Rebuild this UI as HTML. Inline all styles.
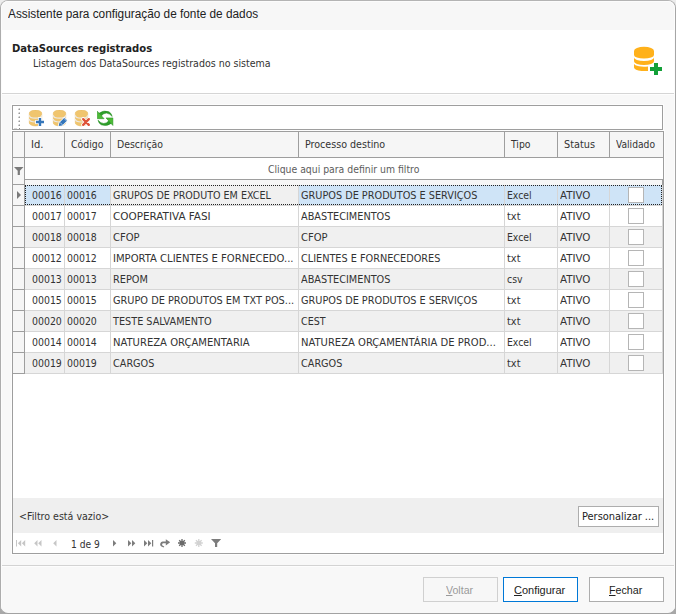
<!DOCTYPE html><html lang="pt-BR"><head><meta charset="utf-8"><title>Assistente para configuração de fonte de dados</title><style>
*{box-sizing:border-box;margin:0;padding:0}
html,body{width:676px;height:614px;overflow:hidden;background:linear-gradient(to bottom,#ececec 0,#ececec 50%,#a8a8a8 50%,#a8a8a8 100%)}
body{font-family:"DejaVu Sans Condensed","Liberation Sans",sans-serif;font-size:11px;color:#333;position:relative}
.win{position:absolute;left:0;top:0;width:676px;height:614px;background:#f8f8f8;border:1px solid #adadad;border-top-color:#b4b4b4;border-right-color:#a6a6a6;border-bottom-color:#a2a2a2;border-radius:8px;overflow:hidden}
.a{position:absolute}
.t{position:absolute;white-space:nowrap;line-height:14px;transform-origin:0 0}
.hl{position:absolute;height:1px}
.vl{position:absolute;width:1px}
.btn{position:absolute;height:25px;border:1px solid #adadad;background:#fff}
.cb{position:absolute;width:16px;height:16px;border:1px solid #b5b5b5;background:#fff}
u{text-decoration:underline;text-underline-offset:1px}
</style></head><body>
<div class="win">
<div class="a" style="left:-1px;top:-1px;width:676px;height:614px">
<div class="a" style="left:0;top:0;width:676px;height:30px;background:#f7f7f7"></div>
<div class="t" style="left:8.0px;top:7px;font-family:'Liberation Sans',sans-serif;font-size:12px;color:#222;transform:scaleX(0.984)">Assistente para configuração de fonte de dados</div>
<div class="a" style="left:0;top:30px;width:676px;height:63px;background:#fff"></div>
<div class="hl" style="left:0;top:93px;width:676px;background:#d5d5d5"></div>
<div class="hl" style="left:0;top:94px;width:676px;background:#fdfdfd"></div>
<div class="t" style="left:11.6px;top:42px;font-weight:bold;color:#222;transform:scaleX(1.015)">DataSources registrados</div>
<div class="t" style="left:33.0px;top:57px;;transform:scaleX(0.958)">Listagem dos DataSources registrados no sistema</div>
<svg class="a" style="left:630px;top:43px" width="36" height="36" viewBox="630 43 36 36">
<g fill="#ffb11b">
<path d="M634 51 a10 4.2 0 0 1 20 0 v4 a10 3.6 0 0 1 -20 0z"/>
<path d="M634 57.500 a10 3.400 0 0 0 20 0 v3.700 a10 3.800 0 0 1 -20 0z"/>
<path d="M634 63.700 a10 3.400 0 0 0 14 2.700 v4.700 h-6.500 a10 4 0 0 1 -7.500 -3.600z"/>
</g>
<path fill="#13a038" d="M654 63h4v4h4v4h-4v4h-4v-4h-4v-4h4z"/>
</svg>
<div class="a" style="left:12px;top:105px;width:651px;height:25px;background:#fff;border:1px solid #9e9e9e;box-shadow:0 0 0 1px #fdfdfd"></div>
<div class="a" style="left:18px;top:108px;width:2px;height:2px;background:#c6c6c6"></div>
<div class="a" style="left:18px;top:108px;width:1px;height:1px;background:#ececec"></div>
<div class="a" style="left:19px;top:109px;width:1px;height:1px;background:#9a9a9a"></div>
<div class="a" style="left:18px;top:112px;width:2px;height:2px;background:#c6c6c6"></div>
<div class="a" style="left:18px;top:112px;width:1px;height:1px;background:#ececec"></div>
<div class="a" style="left:19px;top:113px;width:1px;height:1px;background:#9a9a9a"></div>
<div class="a" style="left:18px;top:116px;width:2px;height:2px;background:#c6c6c6"></div>
<div class="a" style="left:18px;top:116px;width:1px;height:1px;background:#ececec"></div>
<div class="a" style="left:19px;top:117px;width:1px;height:1px;background:#9a9a9a"></div>
<div class="a" style="left:18px;top:120px;width:2px;height:2px;background:#c6c6c6"></div>
<div class="a" style="left:18px;top:120px;width:1px;height:1px;background:#ececec"></div>
<div class="a" style="left:19px;top:121px;width:1px;height:1px;background:#9a9a9a"></div>
<div class="a" style="left:18px;top:124px;width:2px;height:2px;background:#c6c6c6"></div>
<div class="a" style="left:18px;top:124px;width:1px;height:1px;background:#ececec"></div>
<div class="a" style="left:19px;top:125px;width:1px;height:1px;background:#9a9a9a"></div>
<div class="a" style="left:19px;top:128px;width:1px;height:1px;background:#8c8c8c"></div><div class="a" style="left:14px;top:128px;width:3px;height:1px;background:#d8d8d8"></div>
<svg class="a" style="left:28px;top:110px" width="17" height="17" viewBox="0 0 17 17">
<g transform="translate(1,0)"><path fill="#f0c56e" stroke="#e6b85c" stroke-width="0.500" d="M0.300 3a6.200 2.900 0 0 1 12.400 0v10a6.200 2.900 0 0 1 -12.400 0z"/>
<path fill="none" stroke="#ece9e2" stroke-width="1.200" d="M0.300 5.300a6.200 2.900 0 0 0 12.400 0M0.300 9.100a6.200 2.900 0 0 0 12.400 0"/></g>
<path fill="#3576ba" stroke="#fff" stroke-width="1.600" paint-order="stroke" d="M10.800 8h2.400v2.800h2.800v2.400h-2.800v2.800h-2.400v-2.800h-2.800v-2.400h2.800z"/>
</svg>
<svg class="a" style="left:52px;top:110px" width="17" height="17" viewBox="0 0 17 17">
<g transform="translate(1,0)"><path fill="#f0c56e" stroke="#e6b85c" stroke-width="0.500" d="M0.300 3a6.200 2.900 0 0 1 12.400 0v10a6.200 2.900 0 0 1 -12.400 0z"/>
<path fill="none" stroke="#ece9e2" stroke-width="1.200" d="M0.300 5.300a6.200 2.900 0 0 0 12.400 0M0.300 9.100a6.200 2.900 0 0 0 12.400 0"/></g>
<path fill="#3576ba" stroke="#fff" stroke-width="1.600" paint-order="stroke" d="M6.700 15.900l0.700-3.100 5-5 2.800 2.800-5 5z"/><path stroke="#dfe9f5" stroke-width="0.700" d="M12 8.400l2.700 2.700M8 12.400l2.700 2.700" fill="none"/>
</svg>
<svg class="a" style="left:74px;top:110px" width="17" height="17" viewBox="0 0 17 17">
<g transform="translate(1,0)"><path fill="#f0c56e" stroke="#e6b85c" stroke-width="0.500" d="M0.300 3a6.200 2.900 0 0 1 12.400 0v10a6.200 2.900 0 0 1 -12.400 0z"/>
<path fill="none" stroke="#ece9e2" stroke-width="1.200" d="M0.300 5.300a6.200 2.900 0 0 0 12.400 0M0.300 9.100a6.200 2.900 0 0 0 12.400 0"/></g>
<path stroke="#fff" stroke-width="4" stroke-linecap="round" fill="none" d="M9.200 9.200l5.600 5.600M14.800 9.200l-5.600 5.600"/><path stroke="#de5438" stroke-width="2.400" stroke-linecap="round" fill="none" d="M9.200 9.200l5.600 5.600M14.800 9.200l-5.600 5.600"/>
</svg>
<svg class="a" style="left:97px;top:110px" width="17" height="17" viewBox="0 0 17 17">
<g fill="#2f9f2a" stroke="#1f8a1c" stroke-width="0.500" stroke-linejoin="round"><path d="M2 3.200Q7 -0.300 12 1.800Q14.600 3.300 15.200 6.400Q12.800 3.500 9.500 3.100Q6.500 3.100 4.400 5.800z"/><path d="M14.200 13.400Q9.200 16.900 4.200 14.800Q1.600 13.300 1 10.200Q3.400 13.100 6.700 13.500Q9.700 13.500 11.800 10.800z"/><path fill="#4cbb35" d="M0.300 1.200v7.500h6.800z"/><path fill="#4cbb35" d="M15.900 15.500v-7.600h-6.900z"/></g>
</svg>
<div class="a" style="left:12px;top:131px;width:652px;height:423px;background:#fff;border:1px solid #9e9e9e;box-shadow:0 0 0 1px #fdfdfd"></div>
<div class="a" style="left:13px;top:132px;width:650px;height:25px;background:#f6f6f6"></div>
<div class="hl" style="left:13px;top:157px;width:650px;background:#9e9e9e"></div>
<div class="vl" style="left:24px;top:132px;height:25px;background:#9e9e9e"></div>
<div class="vl" style="left:64px;top:132px;height:25px;background:#9e9e9e"></div>
<div class="vl" style="left:110px;top:132px;height:25px;background:#9e9e9e"></div>
<div class="vl" style="left:298px;top:132px;height:25px;background:#9e9e9e"></div>
<div class="vl" style="left:504px;top:132px;height:25px;background:#9e9e9e"></div>
<div class="vl" style="left:557px;top:132px;height:25px;background:#9e9e9e"></div>
<div class="vl" style="left:609px;top:132px;height:25px;background:#9e9e9e"></div>
<div class="t" style="left:30.5px;top:138px;;transform:scaleX(1.013)">Id.</div>
<div class="t" style="left:70.5px;top:138px;;transform:scaleX(0.943)">Código</div>
<div class="t" style="left:116.5px;top:138px;;transform:scaleX(0.945)">Descrição</div>
<div class="t" style="left:304.5px;top:138px;;transform:scaleX(0.964)">Processo destino</div>
<div class="t" style="left:510.5px;top:138px;;transform:scaleX(0.938)">Tipo</div>
<div class="t" style="left:563.5px;top:138px;;transform:scaleX(0.983)">Status</div>
<div class="t" style="left:615.5px;top:138px;;transform:scaleX(0.925)">Validado</div>
<div class="a" style="left:13px;top:158px;width:11px;height:216px;background:#f6f6f6"></div>
<div class="vl" style="left:24px;top:158px;height:216px;background:#9e9e9e"></div>
<div class="hl" style="left:25px;top:179px;width:638px;background:#9e9e9e"></div>
<div class="a" style="left:25px;top:180px;width:638px;height:5px;background:#f6f6f6"></div>
<div class="vl" style="left:662px;top:180px;height:5px;background:#9e9e9e"></div>
<div class="t" style="left:267.6px;top:163px;color:#5c5c5c;transform:scaleX(0.940)">Clique aqui para definir um filtro</div>
<svg class="a" style="left:14px;top:167px" width="10" height="9" viewBox="0 0 10 9"><path fill="#7a7a7a" d="M0 0h9.500l-3.600 3.800v4.200h-2.200v-4.200z"/></svg>
<div class="a" style="left:25px;top:185px;width:637px;height:20px;background:#cfe4f7"></div>
<div class="a" style="left:111px;top:185px;width:187px;height:20px;background:#f0f0f0"></div>
<div class="hl" style="left:13px;top:184px;width:11px;background:#9e9e9e"></div>
<div class="t" style="left:31.7px;top:189px;;transform:scaleX(0.947)">00016</div>
<div class="t" style="left:66.6px;top:189px;;transform:scaleX(0.947)">00016</div>
<div class="t" style="left:112.6px;top:189px;;transform:scaleX(0.966)">GRUPOS DE PRODUTO EM EXCEL</div>
<div class="t" style="left:300.6px;top:189px;;transform:scaleX(0.982)">GRUPOS DE PRODUTOS E SERVIÇOS</div>
<div class="t" style="left:506.6px;top:189px;;transform:scaleX(0.939)">Excel</div>
<div class="t" style="left:559.6px;top:189px;;transform:scaleX(1.039)">ATIVO</div>
<div class="cb" style="left:628px;top:187px"></div>
<div class="a" style="left:25px;top:206px;width:637px;height:20px;background:#fff"></div>
<div class="hl" style="left:13px;top:205px;width:11px;background:#9e9e9e"></div>
<div class="hl" style="left:25px;top:205px;width:638px;background:#d6d6d6"></div>
<div class="t" style="left:31.7px;top:210px;;transform:scaleX(0.947)">00017</div>
<div class="t" style="left:66.6px;top:210px;;transform:scaleX(0.947)">00017</div>
<div class="t" style="left:112.6px;top:210px;;transform:scaleX(1.054)">COOPERATIVA FASI</div>
<div class="t" style="left:300.6px;top:210px;;transform:scaleX(0.982)">ABASTECIMENTOS</div>
<div class="t" style="left:506.6px;top:210px;;transform:scaleX(0.991)">txt</div>
<div class="t" style="left:559.6px;top:210px;;transform:scaleX(1.039)">ATIVO</div>
<div class="cb" style="left:628px;top:208px"></div>
<div class="a" style="left:25px;top:227px;width:637px;height:20px;background:#f0f0f0"></div>
<div class="hl" style="left:13px;top:226px;width:11px;background:#9e9e9e"></div>
<div class="hl" style="left:25px;top:226px;width:638px;background:#d6d6d6"></div>
<div class="t" style="left:31.7px;top:231px;;transform:scaleX(0.947)">00018</div>
<div class="t" style="left:66.6px;top:231px;;transform:scaleX(0.947)">00018</div>
<div class="t" style="left:112.6px;top:231px;;transform:scaleX(1.009)">CFOP</div>
<div class="t" style="left:300.6px;top:231px;;transform:scaleX(1.009)">CFOP</div>
<div class="t" style="left:506.6px;top:231px;;transform:scaleX(0.939)">Excel</div>
<div class="t" style="left:559.6px;top:231px;;transform:scaleX(1.039)">ATIVO</div>
<div class="cb" style="left:628px;top:229px"></div>
<div class="a" style="left:25px;top:248px;width:637px;height:20px;background:#fff"></div>
<div class="hl" style="left:13px;top:247px;width:11px;background:#9e9e9e"></div>
<div class="hl" style="left:25px;top:247px;width:638px;background:#d6d6d6"></div>
<div class="t" style="left:31.7px;top:252px;;transform:scaleX(0.947)">00012</div>
<div class="t" style="left:66.6px;top:252px;;transform:scaleX(0.947)">00012</div>
<div class="t" style="left:112.6px;top:252px;;transform:scaleX(1.014)">IMPORTA CLIENTES E FORNECEDO...</div>
<div class="t" style="left:300.6px;top:252px;;transform:scaleX(0.981)">CLIENTES E FORNECEDORES</div>
<div class="t" style="left:506.6px;top:252px;;transform:scaleX(0.991)">txt</div>
<div class="t" style="left:559.6px;top:252px;;transform:scaleX(1.039)">ATIVO</div>
<div class="cb" style="left:628px;top:250px"></div>
<div class="a" style="left:25px;top:269px;width:637px;height:20px;background:#f0f0f0"></div>
<div class="hl" style="left:13px;top:268px;width:11px;background:#9e9e9e"></div>
<div class="hl" style="left:25px;top:268px;width:638px;background:#d6d6d6"></div>
<div class="t" style="left:31.7px;top:273px;;transform:scaleX(0.947)">00013</div>
<div class="t" style="left:66.6px;top:273px;;transform:scaleX(0.947)">00013</div>
<div class="t" style="left:112.6px;top:273px;;transform:scaleX(0.985)">REPOM</div>
<div class="t" style="left:300.6px;top:273px;;transform:scaleX(0.982)">ABASTECIMENTOS</div>
<div class="t" style="left:506.6px;top:273px;;transform:scaleX(0.942)">csv</div>
<div class="t" style="left:559.6px;top:273px;;transform:scaleX(1.039)">ATIVO</div>
<div class="cb" style="left:628px;top:271px"></div>
<div class="a" style="left:25px;top:290px;width:637px;height:20px;background:#fff"></div>
<div class="hl" style="left:13px;top:289px;width:11px;background:#9e9e9e"></div>
<div class="hl" style="left:25px;top:289px;width:638px;background:#d6d6d6"></div>
<div class="t" style="left:31.7px;top:294px;;transform:scaleX(0.947)">00015</div>
<div class="t" style="left:66.6px;top:294px;;transform:scaleX(0.947)">00015</div>
<div class="t" style="left:112.6px;top:294px;;transform:scaleX(0.986)">GRUPO DE PRODUTOS EM TXT POS...</div>
<div class="t" style="left:300.6px;top:294px;;transform:scaleX(0.982)">GRUPOS DE PRODUTOS E SERVIÇOS</div>
<div class="t" style="left:506.6px;top:294px;;transform:scaleX(0.991)">txt</div>
<div class="t" style="left:559.6px;top:294px;;transform:scaleX(1.039)">ATIVO</div>
<div class="cb" style="left:628px;top:292px"></div>
<div class="a" style="left:25px;top:311px;width:637px;height:20px;background:#f0f0f0"></div>
<div class="hl" style="left:13px;top:310px;width:11px;background:#9e9e9e"></div>
<div class="hl" style="left:25px;top:310px;width:638px;background:#d6d6d6"></div>
<div class="t" style="left:31.7px;top:315px;;transform:scaleX(0.947)">00020</div>
<div class="t" style="left:66.6px;top:315px;;transform:scaleX(0.947)">00020</div>
<div class="t" style="left:112.6px;top:315px;;transform:scaleX(0.981)">TESTE SALVAMENTO</div>
<div class="t" style="left:300.6px;top:315px;;transform:scaleX(0.961)">CEST</div>
<div class="t" style="left:506.6px;top:315px;;transform:scaleX(0.991)">txt</div>
<div class="t" style="left:559.6px;top:315px;;transform:scaleX(1.039)">ATIVO</div>
<div class="cb" style="left:628px;top:313px"></div>
<div class="a" style="left:25px;top:332px;width:637px;height:20px;background:#fff"></div>
<div class="hl" style="left:13px;top:331px;width:11px;background:#9e9e9e"></div>
<div class="hl" style="left:25px;top:331px;width:638px;background:#d6d6d6"></div>
<div class="t" style="left:31.7px;top:336px;;transform:scaleX(0.947)">00014</div>
<div class="t" style="left:66.6px;top:336px;;transform:scaleX(0.947)">00014</div>
<div class="t" style="left:112.6px;top:336px;;transform:scaleX(1.013)">NATUREZA ORÇAMENTARIA</div>
<div class="t" style="left:300.6px;top:336px;;transform:scaleX(1.011)">NATUREZA ORÇAMENTÁRIA DE PROD...</div>
<div class="t" style="left:506.6px;top:336px;;transform:scaleX(0.939)">Excel</div>
<div class="t" style="left:559.6px;top:336px;;transform:scaleX(1.039)">ATIVO</div>
<div class="cb" style="left:628px;top:334px"></div>
<div class="a" style="left:25px;top:353px;width:637px;height:20px;background:#f0f0f0"></div>
<div class="hl" style="left:13px;top:352px;width:11px;background:#9e9e9e"></div>
<div class="hl" style="left:25px;top:352px;width:638px;background:#d6d6d6"></div>
<div class="t" style="left:31.7px;top:357px;;transform:scaleX(0.947)">00019</div>
<div class="t" style="left:66.6px;top:357px;;transform:scaleX(0.947)">00019</div>
<div class="t" style="left:112.6px;top:357px;;transform:scaleX(0.978)">CARGOS</div>
<div class="t" style="left:300.6px;top:357px;;transform:scaleX(0.978)">CARGOS</div>
<div class="t" style="left:506.6px;top:357px;;transform:scaleX(0.991)">txt</div>
<div class="t" style="left:559.6px;top:357px;;transform:scaleX(1.039)">ATIVO</div>
<div class="cb" style="left:628px;top:355px"></div>
<div class="hl" style="left:13px;top:373px;width:11px;background:#9e9e9e"></div>
<div class="hl" style="left:25px;top:373px;width:638px;background:#d6d6d6"></div>
<div class="vl" style="left:64px;top:185px;height:188px;background:#d6d6d6"></div>
<div class="vl" style="left:110px;top:185px;height:188px;background:#d6d6d6"></div>
<div class="vl" style="left:298px;top:185px;height:188px;background:#d6d6d6"></div>
<div class="vl" style="left:504px;top:185px;height:188px;background:#d6d6d6"></div>
<div class="vl" style="left:557px;top:185px;height:188px;background:#d6d6d6"></div>
<div class="vl" style="left:609px;top:185px;height:188px;background:#d6d6d6"></div>
<div class="vl" style="left:662px;top:185px;height:188px;background:#d6d6d6"></div>
<div class="a" style="left:25px;top:185px;width:637px;height:20px;border:1px dotted #222"></div>
<svg class="a" style="left:17px;top:191px" width="5" height="9" viewBox="0 0 5 9"><path fill="#7a7a7a" d="M0 0l4 4-4 4z"/></svg>
<div class="a" style="left:13px;top:498px;width:650px;height:35px;background:#efefef"></div>
<div class="t" style="left:19.0px;top:510px;;transform:scaleX(0.958)">&lt;Filtro está vazio&gt;</div>
<div class="a" style="left:578px;top:506px;width:81px;height:21px;border:1px solid #adadad;background:#fff"></div>
<div class="t" style="left:581.8px;top:510px;color:#222;transform:scaleX(0.994)">Personalizar ...</div>
<div class="t" style="left:70.8px;top:538px;;transform:scaleX(0.922)">1 de 9</div>
<svg class="a" style="left:13px;top:536px" width="215" height="16" viewBox="13 536 215 16">
<g fill="#c6c6c6"><path d="M16 540h1v6.600h-1zM21.200 540v6.600l-3.300-3.300zM25.200 540v6.600l-3.300-3.300zM37.500 540v6.600l-3.300-3.300zM41.500 540v6.600l-3.300-3.300zM56.500 540v6.600l-3.300-3.300z"/></g>
<g fill="#7c7c7c"><path d="M113 540v6.600l3.300-3.300zM128 540v6.600l3.300-3.300zM132 540v6.600l3.300-3.300zM144 540v6.600l3.300-3.300zM148 540v6.600l3.300-3.300zM152 540h1.200v6.600h-1.200z"/>
<path d="M165.800 539.200l4.400 3.100-4.400 3.100v-2.200h-2.300a1.300 1.300 0 0 0 -0.600 2.500l1.400 0.700-0.700 1.100-1.600-0.800a2.700 2.700 0 0 1 1.400-5.200h2.400z"/>
<path d="M211 539h10.200l-4 4.200v3.800h-2.200v-3.800z"/></g>
<path stroke="#6a6a6a" stroke-width="1.300" fill="none" d="M178.00 543.00L186.00 543.00M179.17 540.17L184.83 545.83M182.00 539.00L182.00 547.00M184.83 540.17L179.17 545.83"/><circle cx="182" cy="543" r="2.200" fill="#6a6a6a"/>
<path stroke="#d2d2d2" stroke-width="1.300" fill="none" d="M194.80 543.00L202.80 543.00M195.97 540.17L201.63 545.83M198.80 539.00L198.80 547.00M201.63 540.17L195.97 545.83"/><circle cx="198.8" cy="543" r="2.200" fill="#d2d2d2"/>
</svg>
<div class="hl" style="left:0;top:565px;width:676px;background:#d3d3d3"></div>
<div class="hl" style="left:0;top:566px;width:676px;background:#fdfdfd"></div>
<div class="btn" style="left:423px;width:75px;top:577px;border-color:#d0d0d0;background:#f7f7f7"></div>
<div class="btn" style="left:503px;width:75px;top:577px;border-color:#0078d7"></div>
<div class="btn" style="left:589px;width:75px;top:577px"></div>
<div class="t" style="left:445.8px;top:583px;font-family:'Liberation Sans',sans-serif;font-size:11.3px;color:#9a9a9a;transform:scaleX(0.935)"><u>V</u>oltar</div>
<div class="t" style="left:514.2px;top:583px;font-family:'Liberation Sans',sans-serif;font-size:11.3px;color:#222;transform:scaleX(0.971)"><u>C</u>onfigurar</div>
<div class="t" style="left:608.8px;top:583px;font-family:'Liberation Sans',sans-serif;font-size:11.3px;color:#222;transform:scaleX(0.947)"><u>F</u>echar</div>
<div class="a" style="left:1px;top:1px;width:674px;height:608px;border:1px solid #fcfcfc;border-bottom:none;border-radius:7px 7px 0 0;pointer-events:none"></div>
</div></div></body></html>
